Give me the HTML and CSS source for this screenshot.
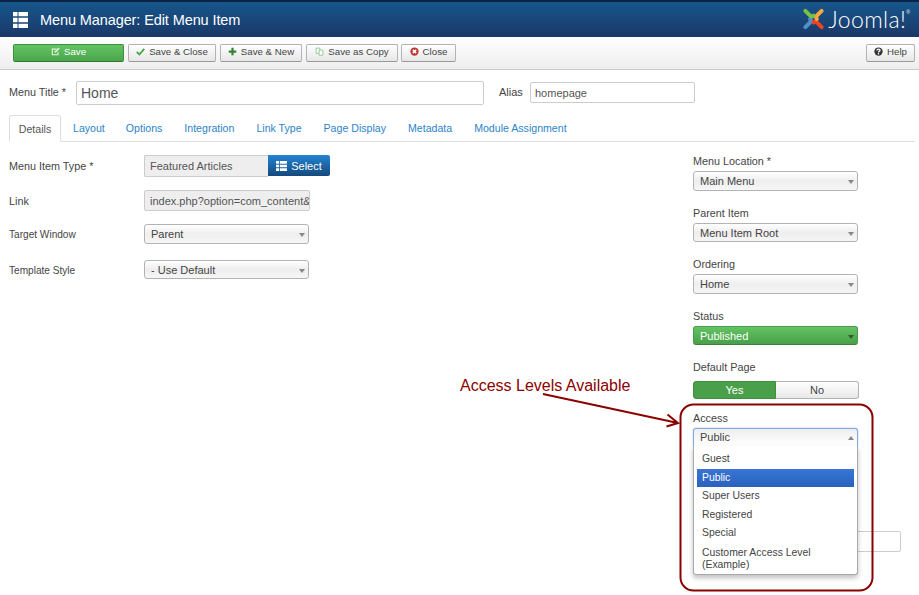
FILE: index.html
```html
<!DOCTYPE html>
<html lang="en">
<head>
<meta charset="utf-8">
<title>Menu Manager: Edit Menu Item</title>
<link rel="stylesheet" href="styles.css">
</head>
<body>
<header class="topbar">
  <svg class="topbar-icon" viewBox="0 0 15 16" width="15" height="16"><path fill="#fff" d="M0 0h4.500v4.300H0zM5.500 0H15v4.300H5.500zM0 5.700h4.500v4.600H0zM5.500 5.700H15v4.600H5.500zM0 11.700h4.500V16H0zM5.500 11.700H15V16H5.500z"/></svg>
  <h1 class="topbar-title">Menu Manager: Edit Menu Item</h1>
  <div class="logo">
    <svg viewBox="0 0 24 24" width="23" height="24" fill="none" stroke-width="4.200" stroke-linecap="round" stroke-linejoin="round">
      <path stroke="#5091cd" d="M3.500 20.500 L8.500 15.500 Q10 14 8.500 12"/>
      <path stroke="#f44321" d="M20.500 20.500 L15.500 15.500 Q14 14 12 15.500"/>
      <path stroke="#f9a541" d="M20.500 3.500 L15.500 8.500 Q14 10 15.500 12"/>
      <path stroke="#7ac143" d="M3.500 3.500 L8.500 8.500 Q10 10 12 8.500"/>
    </svg>
    <span class="logo-text">Joomla!</span><sup class="logo-reg">®</sup>
  </div>
</header>

<nav class="toolbar">
  <button class="btn btn-save">
    <svg class="ico" viewBox="0 0 12 12"><path fill="#e2f3dc" d="M1 2h7L6.500 3.500H2.500v6h6V7L10 5.500V11H1z"/><path fill="#e2f3dc" d="M10 .8 11.500 2.300 6.500 7.300 4.500 7.800 5 5.800z"/></svg>Save</button>
  <button class="btn w-saveclose">
    <svg class="ico" viewBox="0 0 12 12"><path fill="none" stroke="#46a546" stroke-width="2.400" d="M1 6.500 4.500 10 11 2.500"/></svg>Save &amp; Close</button>
  <button class="btn w-savenew">
    <svg class="ico" viewBox="0 0 12 12"><path fill="#378137" d="M4.500 1h3v3.500H11v3H7.500V11h-3V7.500H1v-3h3.500z"/></svg>Save &amp; New</button>
  <button class="btn w-savecopy">
    <svg class="ico" viewBox="0 0 12 12"><path fill="#fff" stroke="#7cbf7c" d="M1.500 1.500h5v7h-5z"/><path fill="#fff" stroke="#7cbf7c" d="M5.500 4h5v7h-5z"/></svg>Save as Copy</button>
  <button class="btn w-close">
    <svg class="ico" viewBox="0 0 12 12"><circle cx="6" cy="6" r="5.500" fill="#bd362f"/><path stroke="#fff" stroke-width="2" d="M3.800 3.800l4.400 4.400M8.200 3.800 3.800 8.200"/></svg>Close</button>
  <button class="btn w-help">
    <svg class="ico" viewBox="0 0 12 12"><circle cx="6" cy="6" r="5.500" fill="#333"/><path fill="none" stroke="#fff" stroke-width="1.700" d="M3.900 4.700Q4 2.800 6 2.800 8.100 2.800 8 4.500 7.900 5.400 6.800 5.900 6 6.300 6 7.400"/><path stroke="#fff" stroke-width="1.700" d="M6 8.200V10"/></svg>Help</button>
</nav>

<main class="page">
  <div class="title-row">
    <label class="title-label">Menu Title *</label>
    <input class="input input-title" value="Home">
    <label class="alias-label">Alias</label>
    <input class="input input-alias" value="homepage">
  </div>

  <ul class="tabs">
    <li class="tab tab-active">Details</li>
    <li class="tab">Layout</li>
    <li class="tab">Options</li>
    <li class="tab">Integration</li>
    <li class="tab">Link Type</li>
    <li class="tab">Page Display</li>
    <li class="tab">Metadata</li>
    <li class="tab">Module Assignment</li>
  </ul>

  <div class="columns">
    <section class="col-left">
      <div class="row r-type">
        <label class="row-label">Menu Item Type *</label>
        <div class="readonly type-value">Featured Articles</div>
        <button class="btn-select">
          <svg class="select-ico" viewBox="0 0 12 11"><path fill="#fff" d="M0 0h3.300v3H0zM4.200 0H12v3H4.200zM0 4h3.300v3H0zM4.200 4H12v3H4.200zM0 8h3.300v3H0zM4.200 8H12v3H4.200z"/></svg>Select</button>
      </div>
      <div class="row r-link">
        <label class="row-label">Link</label>
        <input class="readonly link-value" readonly value="index.php?option=com_content&amp;view=featured">
      </div>
      <div class="row r-target">
        <label class="row-label row-label-narrow">Target Window</label>
        <div class="select select-left">Parent</div>
      </div>
      <div class="row r-template">
        <label class="row-label row-label-narrow">Template Style</label>
        <div class="select select-left">- Use Default</div>
      </div>
    </section>

    <aside class="col-right">
      <div class="field">
        <label class="field-label">Menu Location *</label>
        <div class="select h20">Main Menu</div>
      </div>
      <div class="field">
        <label class="field-label">Parent Item</label>
        <div class="select h19">Menu Item Root</div>
      </div>
      <div class="field">
        <label class="field-label">Ordering</label>
        <div class="select h20">Home</div>
      </div>
      <div class="field">
        <label class="field-label">Status</label>
        <div class="select select-green h19">Published</div>
      </div>
      <div class="field">
        <label class="field-label">Default Page</label>
        <div class="toggle">
          <span class="toggle-yes">Yes</span>
          <span class="toggle-no">No</span>
        </div>
      </div>
      <div class="field field-access">
        <label class="field-label">Access</label>
        <div class="select select-open">Public</div>
        <ul class="dropdown">
          <li class="opt">Guest</li>
          <li class="opt opt-active">Public</li>
          <li class="opt">Super Users</li>
          <li class="opt">Registered</li>
          <li class="opt">Special</li>
          <li class="opt opt-long">Customer Access Level (Example)</li>
        </ul>
        <input class="input input-hidden">
      </div>
    </aside>
  </div>
</main>

<svg class="annotation" width="919" height="595" viewBox="0 0 919 595">
  <rect x="680.500" y="404.500" width="192" height="186" rx="13" fill="none" stroke="#8b0000" stroke-width="2"/>
  <path d="M543 394 678 423M667.500 414.500 678 423 666.500 426.500" fill="none" stroke="#8b0000" stroke-width="2"/>
</svg>
<div class="annotation-text">Access Levels Available</div>
</body>
</html>
```
FILE: styles.css
```css
* { box-sizing: border-box; }
html, body { margin: 0; padding: 0; }
body {
  width: 919px;
  height: 595px;
  overflow: hidden;
  position: relative;
  background: #fff;
  font-family: "Liberation Sans", Arial, sans-serif;
  font-size: 11px;
  color: #444;
}
ul { list-style: none; margin: 0; padding: 0; }

.topbar {
  height: 37px;
  display: flex;
  align-items: center;
  padding: 2px 9px 0 13px;
  border-top: 2px solid #0c2444;
  background: linear-gradient(#17568c, #1a3867);
  color: #fff;
}
.topbar-icon { flex: none; margin-top: -2px; }
.topbar-title {
  margin: -2px 0 0 12px;
  font-size: 14.500px;
  letter-spacing: -.1px;
  font-weight: 400;
  flex: 1;
}
.logo { display: flex; align-items: center; margin-top: -3px; }
.logo svg { margin-right: 3px; }
.logo-text {
  font-family: Lato, sans-serif;
  font-weight: 300;
  font-size: 23px;
  letter-spacing: .4px;
  line-height: 24px;
}
.logo-reg { font-size: 5px; margin: -14px 0 0 0; }

.toolbar {
  height: 33px;
  display: flex;
  gap: 4px;
  padding-top: 7px;
  padding-left: 13px;
  background: linear-gradient(#fff, #eee);
  border-bottom: 1px solid #ccc;
}
.btn {
  height: 18px;
  padding: 0 0 3px;
  font: inherit;
  font-size: 9.700px;
  color: #444;
  border: 1px solid #b3b3b3;
  border-bottom-color: #999;
  border-radius: 2px;
  background: linear-gradient(#fff, #e6e6e6);
  display: flex;
  align-items: center;
  justify-content: center;
}
.ico { width: 9px; height: 9px; margin-right: 4px; flex: none; }
.btn-save {
  width: 111px;
  color: #fff;
  border-color: #3f8f3f;
  border-bottom-color: #2f7a2f;
  background: linear-gradient(#62c462, #4ca54c);
}
.w-saveclose { width: 88px; }
.w-savenew { width: 82px; }
.w-savecopy { width: 92px; }
.w-close { width: 55px; margin-left: -1px; }
.w-help { width: 49px; margin-left: auto; position: relative; left: -4px; }

.page { padding: 0; }

.title-row {
  display: flex;
  align-items: flex-start;
  padding: 11px 0 0 9px;
  height: 45px;
}
.title-label { width: 67px; line-height: 22px; font-size: 10.800px; }
.input {
  border: 1px solid #ccc;
  border-radius: 2px;
  background: #fff;
  font-family: inherit;
  color: #555;
  padding: 0 4px;
  margin: 0;
}
.input-title { width: 408px; height: 24px; font-size: 14px; }
.alias-label { margin-left: 15px; width: 31px; line-height: 22px; }
.input-alias { width: 165px; height: 21px; margin-top: 1px; font-size: 11px; }

.tabs {
  display: flex;
  height: 27px;
  margin: 0 4px 0 9px;
  border-bottom: 1px solid #ddd;
  color: #2c84c8;
  font-size: 10.600px;
}
.tab { padding: 0 11px; line-height: 27px; height: 27px; white-space: nowrap; }
.tab:nth-child(2) { padding-left: 12px; padding-right: 10px; }
.tab-active {
  width: 52px;
  padding: 0;
  text-align: center;
  color: #555;
  background: #fff;
  border: 1px solid #ddd;
  border-bottom-color: #fff;
  border-radius: 3px 3px 0 0;
}

.columns { display: flex; }
.col-left { width: 693px; padding: 13px 0 0 9px; }
.col-right { width: 226px; padding-top: 10px; }

.row { display: flex; align-items: center; }
.row-label { width: 135px; font-size: 10.800px; }
.row-label-narrow { font-size: 10.100px; padding-top: 1px; }
.r-type { height: 22px; margin-bottom: 13px; }
.r-link { height: 21px; margin-bottom: 13px; }
.r-target { height: 20px; margin-bottom: 16px; }
.r-template { height: 19px; }
.readonly {
  height: 100%;
  font: inherit;
  line-height: 20px;
  background: #eee;
  border: 1px solid #ccc;
  border-radius: 2px;
  padding-left: 5px;
  color: #555;
  overflow: hidden;
  white-space: nowrap;
}
.type-value { width: 124px; border-right: 0; border-radius: 2px 0 0 2px; }
.link-value { width: 166px; padding-right: 0; }
.btn-select {
  width: 62px;
  height: 21px;
  align-self: flex-start;
  padding: 0;
  border: 0;
  border-radius: 0 2px 2px 0;
  color: #fff;
  font: inherit;
  background: linear-gradient(#2384d3, #15497c);
  display: flex;
  align-items: center;
  justify-content: center;
}
.select-ico { width: 11px; height: 10px; margin-right: 4px; }

.select {
  position: relative;
  height: 100%;
  border: 1px solid #b3b3b3;
  border-radius: 3px;
  background: linear-gradient(#fff 0%, #eee 50%, #f6f6f6 100%);
  padding-left: 6px;
  display: flex;
  align-items: center;
  color: #444;
  width: 165px;
}
.select::after {
  content: "";
  position: absolute;
  right: 3px;
  top: 50%;
  margin-top: -1px;
  border: 3.500px solid transparent;
  border-top: 4px solid #888;
  border-bottom: 0;
}
.select-left { width: 165px; height: 100%; }
.h20 { height: 20px; }
.h19 { height: 19px; }
.select-green {
  color: #fff;
  border-color: #4a9a4a;
  border-bottom-color: #3a7f3a;
  background: linear-gradient(#62c462, #4a9f4a);
}
.select-green::after { border-top-color: #2c5f2c; }

.field { margin-bottom: 13px; }
.field-label { display: block; height: 18px; line-height: 18px; margin-bottom: 1px; color: #444; font-size: 10.800px; }

.toggle {
  display: flex;
  width: 166px;
  height: 18px;
  margin-top: 5px;
  margin-bottom: -3px;
  line-height: 17px;
  text-align: center;
}
.toggle-yes {
  width: 83px;
  color: #fff;
  background: #4a9f4a;
  border: 1px solid #3f8f3f;
  border-radius: 3px 0 0 3px;
}
.toggle-no {
  flex: 1;
  color: #444;
  background: linear-gradient(#fff, #e8e8e8);
  border: 1px solid #b3b3b3;
  border-left: 0;
  border-radius: 0 3px 3px 0;
}

.field-access { position: relative; }
.select-open {
  height: 18px;
  padding-bottom: 2px;
  border-color: #82a9e0;
  border-bottom: 0;
  border-radius: 3px 3px 0 0;
  background: linear-gradient(#eee, #fff);
  box-shadow: 0 0 2px rgba(82, 140, 236, .5);
}
.select-open::after {
  margin-top: -2px;
  border-top: 0;
  border-bottom: 4px solid #888;
}
.dropdown {
  position: absolute;
  left: 0;
  top: 37px;
  width: 165px;
  height: 129px;
  padding: 4px 3px 0;
  background: #fff;
  border: 1px solid #aaa;
  border-top: 0;
  border-radius: 0 0 3px 3px;
  box-shadow: 0 3px 5px rgba(0, 0, 0, .25);
  z-index: 1;
}
.opt { height: 18.600px; line-height: 18.600px; padding-left: 5px; color: #444; font-size: 10.400px; }
.opt-active {
  color: #fff;
  background: linear-gradient(#3875d7, #2a62bc);
}
.opt-long { height: auto; line-height: 12px; padding-top: 4px; padding-right: 10px; }
.input-hidden { display: block; width: 208px; height: 21px; margin-top: 85px; }

.annotation { position: absolute; left: 0; top: 0; pointer-events: none; z-index: 2; }
.annotation-text {
  position: absolute;
  left: 460px;
  top: 377px;
  font-size: 16px;
  line-height: 18px;
  color: #8b0000;
  z-index: 2;
}
```
